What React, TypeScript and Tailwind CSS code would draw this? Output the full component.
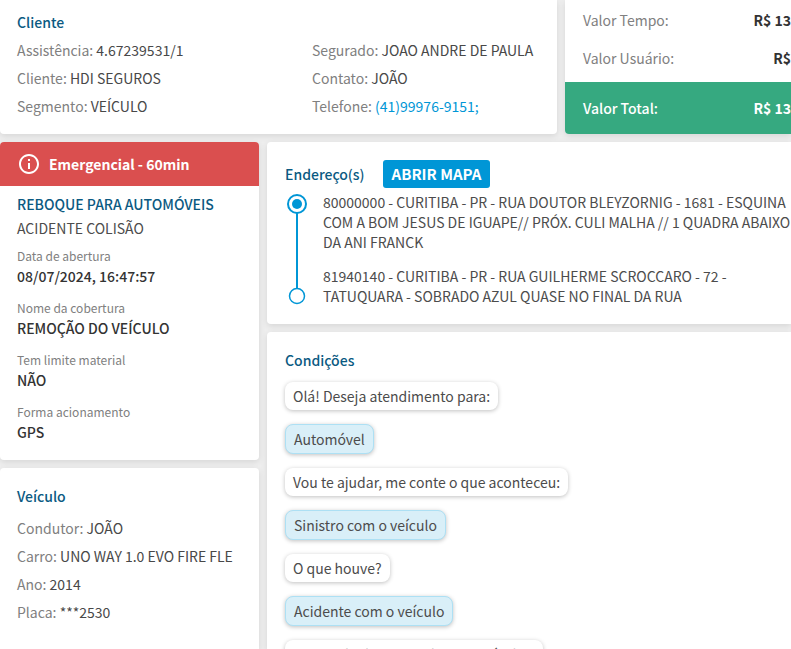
import React from 'react';

interface FieldProps {
  label: string;
  children: React.ReactNode;
}

const Field: React.FC<FieldProps> = ({ label, children }) => {
  return (
    <p className="leading-7 text-[#808080] whitespace-nowrap">
      {label}: <span className="text-[#484848]">{children}</span>
    </p>
  );
};

const Detail: React.FC<FieldProps> = ({ label, children }) => {
  return (
    <div className="mb-3">
      <dt className="text-[12px] leading-5 text-[#808080]">{label}</dt>
      <dd className="leading-5 font-medium text-[#333333]">{children}</dd>
    </div>
  );
};

const messages = [
  { text: 'Olá! Deseja atendimento para:', answer: false },
  { text: 'Automóvel', answer: true },
  { text: 'Vou te ajudar, me conte o que aconteceu:', answer: false },
  { text: 'Sinistro com o veículo', answer: true },
  { text: 'O que houve?', answer: false },
  { text: 'Acidente com o veículo', answer: true },
  { text: 'Os envolvidos no acidente e veículos:', answer: false },
];

const card = 'bg-white shadow-[0_2px_6px_rgba(0,0,0,0.1)]';

const App: React.FC = () => {
  return (
    <div className="h-screen overflow-hidden flex flex-col gap-2 bg-[#eeeeee] text-[14px] text-[#4c4c4c] font-['Noto_Sans_CJK_SC','Source_Sans_Pro',sans-serif]">
      <div className="flex gap-2">
        <section className={`${card} flex-1 rounded-b pl-[17px] pt-2 pb-[14px]`}>
          <h2 className="leading-7 font-medium text-[#0b5a82]">Cliente</h2>
          <div className="grid grid-cols-[295px_1fr]">
            <div>
              <Field label="Assistência">4.67239531/1</Field>
              <Field label="Cliente">HDI SEGUROS</Field>
              <Field label="Segmento">VEÍCULO</Field>
            </div>
            <div>
              <Field label="Segurado">JOAO ANDRE DE PAULA</Field>
              <Field label="Contato">JOÃO</Field>
              <Field label="Telefone">
                <a href="tel:41999769151" className="text-[#0096d6]">(41)99976-9151;</a>
              </Field>
            </div>
          </div>
        </section>

        <section className={`${card} w-[226px] rounded-bl flex flex-col justify-end overflow-hidden`}>
          <div className="flex justify-between pl-[18px] leading-[38px]">
            <span className="text-[#808080]">Valor Tempo:</span>
            <span className="font-bold text-[#333333]">R$ 13</span>
          </div>
          <div className="flex justify-between pl-[18px] leading-[38px] mb-[5px]">
            <span className="text-[#808080]">Valor Usuário:</span>
            <span className="font-bold text-[#333333]">R$</span>
          </div>
          <div className="flex justify-between pl-[18px] leading-[52px] bg-[#36a980] text-white">
            <span className="font-medium">Valor Total:</span>
            <span className="font-bold">R$ 13</span>
          </div>
        </section>
      </div>

      <div className="flex-1 flex gap-2 min-h-0">
        <div className="w-[259px] shrink-0 flex flex-col gap-2">
          <section className={`${card} rounded`}>
            <header className="h-11 flex items-center gap-2 pl-[17px] rounded-t bg-[#da4f4f] text-white">
              <svg className="size-6" viewBox="0 0 24 24" fill="currentColor" aria-hidden="true">
                <path d="M11 7h2v2h-2zm0 4h2v6h-2zm1-9C6.48 2 2 6.48 2 12s4.480 10 10 10 10-4.480 10-10S17.520 2 12 2zm0 18c-4.410 0-8-3.590-8-8s3.590-8 8-8 8 3.590 8 8-3.590 8-8 8z" />
              </svg>
              <span className="font-bold">Emergencial - 60min</span>
            </header>
            <div className="pl-[17px] py-[6px]">
              <h2 className="leading-6 font-medium text-[#0b5a82]">REBOQUE PARA AUTOMÓVEIS</h2>
              <p className="leading-6">ACIDENTE COLISÃO</p>
              <dl className="pt-[6px]">
                <Detail label="Data de abertura">08/07/2024, 16:47:57</Detail>
                <Detail label="Nome da cobertura">REMOÇÃO DO VEÍCULO</Detail>
                <Detail label="Tem limite material">NÃO</Detail>
                <Detail label="Forma acionamento">GPS</Detail>
              </dl>
            </div>
          </section>

          <section className={`${card} flex-1 rounded-t pl-[17px] pt-[14px]`}>
            <h2 className="leading-7 mb-1 font-medium text-[#0b5a82]">Veículo</h2>
            <Field label="Condutor">JOÃO</Field>
            <Field label="Carro">UNO WAY 1.0 EVO FIRE FLE</Field>
            <Field label="Ano">2014</Field>
            <Field label="Placa">***2530</Field>
          </section>
        </div>

        <div className="flex-1 min-w-0 flex flex-col gap-2">
          <section className={`${card} rounded-l pl-[18px] pt-[18px] pb-4`}>
            <div className="flex items-center gap-[18px]">
              <h2 className="font-medium text-[#0b5a82]">Endereço(s)</h2>
              <button type="button" className="h-7 px-[9px] rounded-[3px] bg-[#0096d6] text-[15px] text-white font-bold">
                ABRIR MAPA
              </button>
            </div>
            <div className="flex gap-4 pt-1">
              <svg className="w-[22px] h-[116px] shrink-0" viewBox="0 0 22 116" fill="none" stroke="#0096d6" aria-hidden="true">
                <circle cx="12" cy="12" r="9" strokeWidth="2" />
                <circle cx="12" cy="12" r="5" fill="#0096d6" stroke="none" />
                <path d="M12 21v75" strokeWidth="2" />
                <circle cx="12" cy="104" r="7.500" strokeWidth="1.500" />
              </svg>
              <div className="leading-5 whitespace-nowrap">
                <p>
                  80000000 - CURITIBA - PR - RUA DOUTOR BLEYZORNIG - 1681 - ESQUINA
                  <br />
                  COM A BOM JESUS DE IGUAPE// PRÓX. CULI MALHA // 1 QUADRA ABAIXO
                  <br />
                  DA ANI FRANCK
                </p>
                <p className="mt-[14px]">
                  81940140 - CURITIBA - PR - RUA GUILHERME SCROCCARO - 72 -
                  <br />
                  TATUQUARA - SOBRADO AZUL QUASE NO FINAL DA RUA
                </p>
              </div>
            </div>
          </section>

          <section className={`${card} flex-1 min-h-0 rounded-tl pl-[18px] pt-[14px]`}>
            <h2 className="leading-7 font-medium text-[#0b5a82]">Condições</h2>
            <ul className="flex flex-col items-start gap-[14px] pt-2">
              {messages.map((message) => (
                <li
                  key={message.text}
                  className={
                    message.answer
                      ? 'px-2 leading-7 rounded-lg border border-[#ade0f4] bg-[#d9eff8] shadow-[0_1px_4px_rgba(0,0,0,0.25)]'
                      : 'px-2 leading-7 rounded-lg bg-white shadow-[0_1px_4px_rgba(0,0,0,0.25)]'
                  }
                >
                  {message.text}
                </li>
              ))}
            </ul>
          </section>
        </div>
      </div>
    </div>
  );
};

export default App;
